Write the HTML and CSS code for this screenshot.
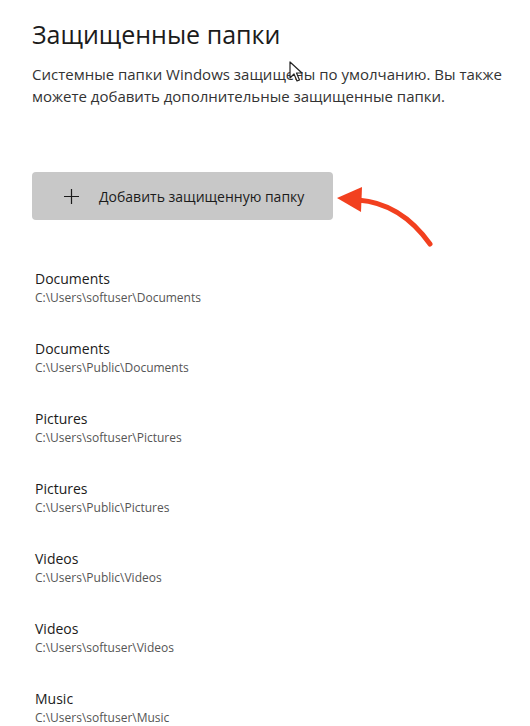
FILE: index.html
```html
<!DOCTYPE html>
<html lang="ru">
<head>
  <meta charset="UTF-8" />
  <title>Защищенные папки</title>
  <link rel="stylesheet" href="styles.css">
</head>
<body>
  <div class="page">
    <h1>Защищенные папки</h1>
    <p class="desc">Системные папки Windows защищены по умолчанию. Вы также можете добавить дополнительные защищенные папки.</p>

    <div class="btn-row">
      <button class="add-btn">
        <svg class="plus" width="15" height="15" viewBox="0 0 15 15">
          <path d="M7.5 0 V15 M0 7.5 H15" stroke="#1b1b1b" stroke-width="1.2"/>
        </svg>
        Добавить защищенную папку
      </button>
      <svg class="arrow" width="100" height="78" viewBox="0 0 100 78">
        <path d="M22 28 C50 30 74 44 94 72" fill="none" stroke="#f2401f" stroke-width="5" stroke-linecap="round"/>
        <polygon points="1,26 26,15 25,40" fill="#f2401f"/>
      </svg>
    </div>

    <ul class="folders">
      <li><span class="name">Documents</span><span class="path">C:\Users\softuser\Documents</span></li>
      <li><span class="name">Documents</span><span class="path">C:\Users\Public\Documents</span></li>
      <li><span class="name">Pictures</span><span class="path">C:\Users\softuser\Pictures</span></li>
      <li><span class="name">Pictures</span><span class="path">C:\Users\Public\Pictures</span></li>
      <li><span class="name">Videos</span><span class="path">C:\Users\Public\Videos</span></li>
      <li><span class="name">Videos</span><span class="path">C:\Users\softuser\Videos</span></li>
      <li><span class="name">Music</span><span class="path">C:\Users\softuser\Music</span></li>
    </ul>

    <svg class="cursor" width="14" height="22" viewBox="0 0 14 22">
      <path d="M1 1 L1 17 L5 13 L8 20 L10.5 19 L7.5 12 L13 12 Z" fill="#fff" stroke="#222" stroke-width="1.2" stroke-linejoin="round"/>
    </svg>
  </div>
</body>
</html>
```

FILE: styles.css
```css
* { margin: 0; padding: 0; box-sizing: border-box; }
body { background: #fff; color: #1b1b1b; font-family: 'Open Sans', sans-serif; }

.page {
  position: relative;
  padding: 16px 20px 0 32px;
  height: 726px;
  overflow: hidden;
}

h1 {
  font-size: 25px;
  font-weight: 400;
  line-height: 36px;
  color: #1b1b1b;
}

.desc {
  margin-top: 11px;
  font-size: 15px;
  line-height: 22px;
  color: #333;
  max-width: 480px;
}

.btn-row {
  display: flex;
  align-items: flex-start;
  margin-top: 65px;
}

.add-btn {
  display: flex;
  align-items: center;
  width: 301px;
  height: 48px;
  padding-left: 32px;
  background: #c8c8c8;
  border: none;
  border-radius: 4px;
  font-family: 'Open Sans', sans-serif;
  font-size: 14px;
  color: #1b1b1b;
}

.plus {
  margin-right: 20px;
  flex-shrink: 0;
}

.arrow {
  margin-left: 3px;
}

.folders {
  list-style: none;
  margin-top: 19px;
}

.folders li {
  display: flex;
  flex-direction: column;
  height: 70px;
  padding-left: 3px;
}

.name {
  font-size: 14px;
  line-height: 20px;
  color: #1b1b1b;
}

.path {
  font-size: 12px;
  line-height: 18px;
  color: #555;
}

.cursor {
  position: absolute;
  left: 289px;
  top: 61px;
}
```
